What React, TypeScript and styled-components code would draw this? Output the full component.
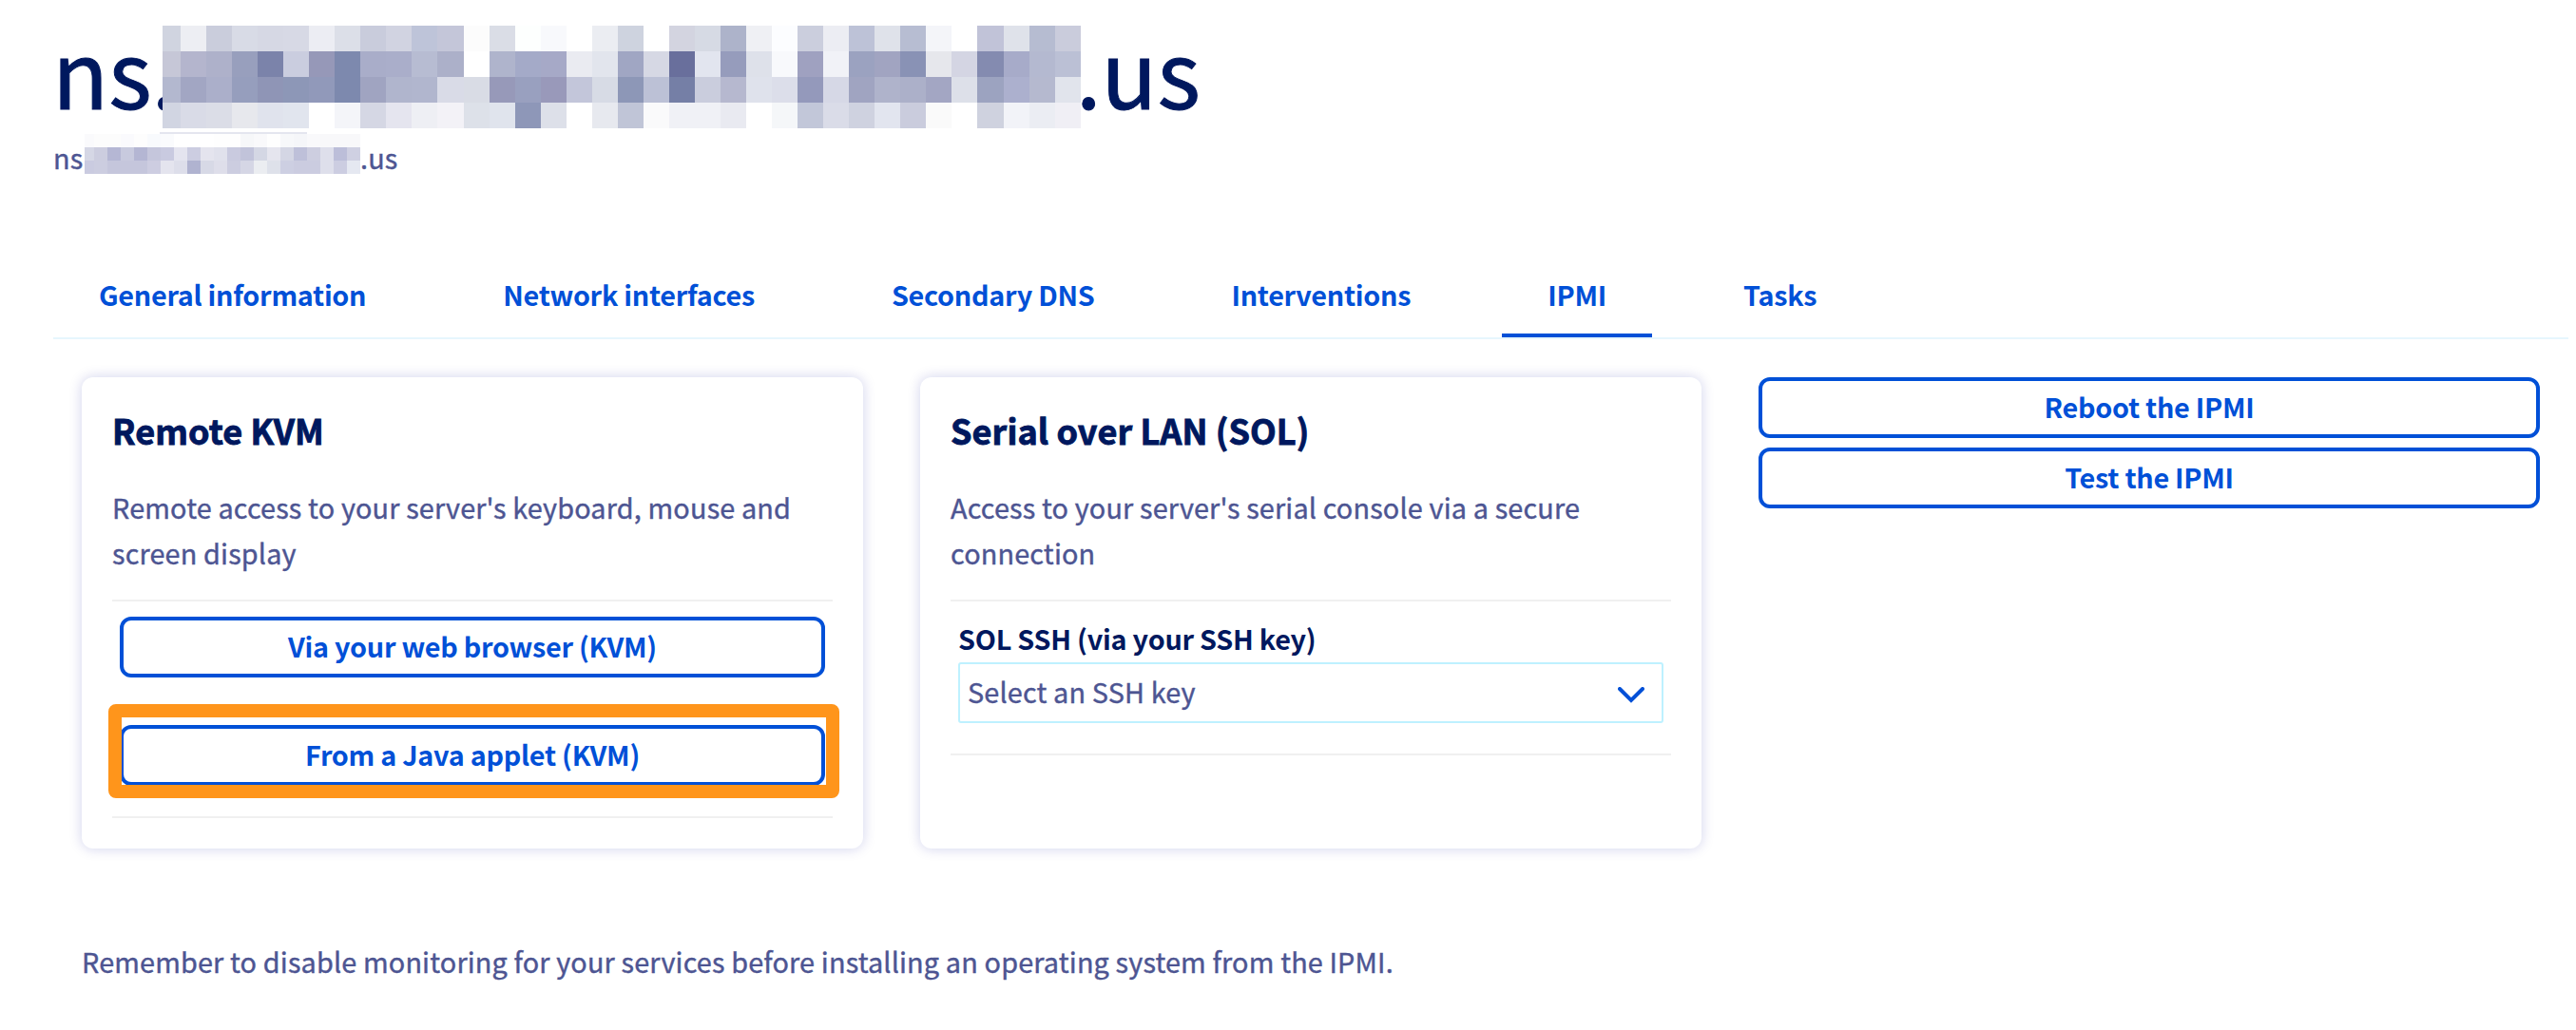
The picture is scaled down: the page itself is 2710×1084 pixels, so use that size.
import styled, { createGlobalStyle } from "styled-components";

const Colors = {
    navy: "#00185e",
    blue: "#0050d7",
    text: "#4d5592",
    divider: "#f0f0f0",
    tabLine: "#e6f6fd",
    selectBorder: "#bef1ff",
    highlight: "#ff951b",
    white: "#ffffff",
}

const GlobalStyle = createGlobalStyle`
    * {
        box-sizing: border-box;
    }

    body {
        margin: 0;
        background-color: ${Colors.white};
        color: ${Colors.text};
        font-family: "Noto Sans CJK SC", "Noto Sans", sans-serif;
        font-size: 28.8px;
        line-height: 48px;
        letter-spacing: 0.16px;
        -webkit-text-stroke: 0.4px currentColor;
    }
`

const PageWrapper = styled.div`
    width: 2710px;
    height: 1084px;
    overflow: hidden;
    padding: 27px 8px 0 56px;
`

const Title = styled.h1`
    display: flex;
    height: 112px;
    margin: 0;
    font-weight: 400;
    font-size: 97px;
    line-height: 91px;
    letter-spacing: 0;
    color: ${Colors.navy};
    -webkit-text-stroke: 1px currentColor;
`

const TitlePrefix = styled.span`
    width: 115px;
    text-indent: -1px;
`

const TitleSuffix = styled.span`
    margin-left: -5px;
`

// thin smear left under the title blocks
const Smear = styled.div`
    width: 155px;
    height: 2px;
    margin-left: 112px;
    background-color: #e4e6ef;
`

const Subtitle = styled.div`
    display: flex;
    height: 56px;
    line-height: 50px;
`

const SubtitlePrefix = styled.span`
    width: 33px;
`

const Mosaic = styled.div<{ $first: number; $cell: number; $row: number; $count: number }>`
    display: grid;
    position: relative;
    z-index: 1;
    grid-template-columns: ${p => p.$first}px repeat(${p => p.$count - 1}, ${p => p.$cell}px);
    grid-auto-rows: ${p => p.$row}px;
`

const MosaicCell = styled.i<{ $color: string }>`
    background-color: #${p => p.$color};
`

const Tabs = styled.nav`
    display: flex;
    gap: 48px;
    height: 106px;
    margin-top: 54px;
    border-bottom: 2px solid ${Colors.tabLine};
`

const Tab = styled.a<{ $active?: boolean }>`
    padding: 35px 48px 0;
    border-bottom: 4px solid ${p => p.$active ? Colors.blue : "transparent"};
    font-weight: 700;
    letter-spacing: -0.28px;
    color: ${Colors.blue};
    white-space: nowrap;
    -webkit-text-stroke: 0;
`

const Columns = styled.div`
    display: grid;
    grid-template-columns: repeat(3, 822px);
    column-gap: 60px;
    padding: 40px 30px 0;
`

const Card = styled.section`
    height: 496px;
    padding: 30px 32px;
    border-radius: 12px;
    box-shadow: 0 0 14px rgba(0, 14, 156, 0.19);
`

const CardTitle = styled.h2`
    margin: 0 0 33px;
    font-weight: 700;
    font-size: 36px;
    line-height: 50px;
    letter-spacing: 0.1px;
    color: ${Colors.navy};
    -webkit-text-stroke: 0.9px currentColor;
`

const Description = styled.p`
    margin: 0;
    padding-bottom: 25px;
`

const CardActions = styled.div`
    display: flex;
    flex-direction: column;
    padding: 16px 8px 32px;
    border-top: 2px solid ${Colors.divider};
    border-bottom: 2px solid ${Colors.divider};
`

const Button = styled.button`
    width: 100%;
    height: 64px;
    padding: 0 0 2px;
    border: 4px solid ${Colors.blue};
    border-radius: 12px;
    background-color: ${Colors.white};
    font-family: inherit;
    font-weight: 700;
    font-size: 28.8px;
    line-height: 54px;
    letter-spacing: -0.28px;
    color: ${Colors.blue};
    -webkit-text-stroke: 0;
`

const Highlighted = styled.div`
    position: relative;
    height: 64px;
    margin-top: 50px;
`

const HighlightFrame = styled.span`
    position: absolute;
    top: -22px;
    left: -12px;
    width: 769px;
    height: 99px;
    border: 14px solid ${Colors.highlight};
    border-radius: 8px;
`

const Label = styled.label`
    height: 48px;
    font-weight: 700;
    line-height: 46px;
    letter-spacing: -0.25px;
    color: ${Colors.navy};
    -webkit-text-stroke: 0;
`

const Select = styled.div`
    display: flex;
    align-items: center;
    justify-content: space-between;
    height: 64px;
    padding: 0 18px 2px 8px;
    border: 2px solid ${Colors.selectBorder};
    border-radius: 3px;

    svg {
        margin-top: 8px;
    }
`

const SideActions = styled.div`
    display: flex;
    flex-direction: column;
    gap: 10px;
`

const Reminder = styled.p`
    margin: 95px 0 0 30px;
`

// one row of hex colours per line of blocks
const titleBlocks = [
    "d0d4e0 edeef3 cacddc d8dbe6 d6d8e4 d7d9e5 ecedf3 dcdfe8 c9ccdc d1d3e1 bec4d9 c4c6d9 fcfcfc dadde6 fdfffe f8f9fc ffffff ebedf2 ced3df ffffff d3d4e0 d6dae4 adb3ca eff0f4 fcfdff cbcedd ecedf3 bdc2d7 dfe2ea b7bdd2 f4f5f9 ffffff c1c3d8 dfe2ea b6bcd1 caccdc",
    "c6c7d7 b4b5cd aeb1ca 989fbd 7b83aa cacddf 9698b8 7d89ae a9adc9 aaaeca b7bcd2 acb0c9 ffffff afb4cc a4aac8 a6a9c7 eaebf1 e2e5ed a0a6c3 d6d8e4 696f9c e2e5ef 969cbc dee1ea f8f9fc 9fa1c0 f1f2f7 9ba2c0 a1a4c1 8992b5 e6e7ec d4d5e3 848bb0 a7abc9 b4b9d0 bbc0d5",
    "b3b8cf a2a6c3 abafca 969ebd 8f95b6 8d97b7 9199ba 7d89ae a0a4c1 b0b5cd b1b6ce d9dbe7 d9dce5 9799b9 99a0bf 9999ba c3c6da d7dbe5 8d97b7 bcc1d6 757fa6 cacddd b6b8cf dfe2ec dcdeea 9499bb d6d8e6 a0a4c1 afb3cb acb0c9 a3a6c3 dde0e9 9ca3c0 acb0ce b5b9cf e1e4ec",
    "d1d5e2 d9dbe7 dbdde7 e7e8ed e0e3ed e1e5ee ffffff f4f5f9 d5d7e4 e5e5ef eeeff4 f3f2f7 dde1e9 e0e4ed 8e97b8 dde0e9 ffffff e7e9ef c0c5d7 fafafb f0f1f6 f0f1f6 e9eaf1 ffffff f5f7f9 c2c7d9 dadce8 cfd2e0 e2e5ef caccdd fafafa ffffff cfd2df f2f3f8 ebedf3 f0eff5",
]

const subtitleBlocks = [
    "fafafc fcfcfc fcfcfc fafafd fdfdfd f8fafd fafbfd ffffff ffffff ffffff fefefe fefefe f6f7f9 f9f9fb fefefe f7f8fa f5f6f9 f9f9fb f8f8fa f8f8fa f8f8fa",
    "d5d7e5 cccddf b5b7d4 c8cade b4b6d3 c5c6dc c9cae0 e4e4ef cccde1 e4e4ee e0e1ec c9cadf c1c3da d4d7e4 e5e5ee d4d6e4 bec0d9 cdcee0 dedfeb bcbed9 cfd0e2",
    "cacbe0 cccde0 c5c6dc c5c6dc c5c6dc cdcde1 e4e4ee dddeea b0b3d0 d7d9e6 dedeea cccde0 d5d6e5 ebedf1 dee1ea cdcfe2 cbcce0 cbcce0 dedfeb cccde1 e5e8f1",
]

const tabs = ["General information", "Network interfaces", "Secondary DNS", "Interventions", "IPMI", "Tasks"];

const Blocks = ({ rows, first, cell, row }: { rows: string[]; first: number; cell: number; row: number }) => (
    <Mosaic $first={first} $cell={cell} $row={row} $count={rows[0].split(" ").length}>
        {rows.flatMap((line, y) => line.split(" ").map((color, x) => (
            <MosaicCell key={`${y}-${x}`} $color={color} />
        )))}
    </Mosaic>
)

const App = () => {
    return (
        <PageWrapper>
            <GlobalStyle />
            <Title>
                <TitlePrefix>ns.</TitlePrefix>
                <Blocks rows={titleBlocks} first={19} cell={27.06} row={27} />
                <TitleSuffix>.us</TitleSuffix>
            </Title>
            <Smear />
            <Subtitle>
                <SubtitlePrefix>ns</SubtitlePrefix>
                <Blocks rows={subtitleBlocks} first={10} cell={14} row={14} />
                <span>.us</span>
            </Subtitle>
            <Tabs>
                {tabs.map(tab => (
                    <Tab key={tab} $active={tab === "IPMI"}>{tab}</Tab>
                ))}
            </Tabs>
            <Columns>
                <Card>
                    <CardTitle>Remote KVM</CardTitle>
                    <Description>
                        Remote access to your server's keyboard, mouse and screen display
                    </Description>
                    <CardActions>
                        <Button>Via your web browser (KVM)</Button>
                        <Highlighted>
                            <Button>From a Java applet (KVM)</Button>
                            <HighlightFrame />
                        </Highlighted>
                    </CardActions>
                </Card>
                <Card>
                    <CardTitle>Serial over LAN (SOL)</CardTitle>
                    <Description>
                        Access to your server's serial console via a secure connection
                    </Description>
                    <CardActions>
                        <Label>SOL SSH (via your SSH key)</Label>
                        <Select>
                            Select an SSH key
                            <svg width="28" height="18" viewBox="0 0 28 18" fill="none">
                                <path d="M2 2L14 14L26 2" stroke={Colors.blue} strokeWidth="4" strokeLinecap="round" />
                            </svg>
                        </Select>
                    </CardActions>
                </Card>
                <SideActions>
                    <Button>Reboot the IPMI</Button>
                    <Button>Test the IPMI</Button>
                </SideActions>
            </Columns>
            <Reminder>
                Remember to disable monitoring for your services before installing an operating system from the IPMI.
            </Reminder>
        </PageWrapper>
    )
}

export default App;
